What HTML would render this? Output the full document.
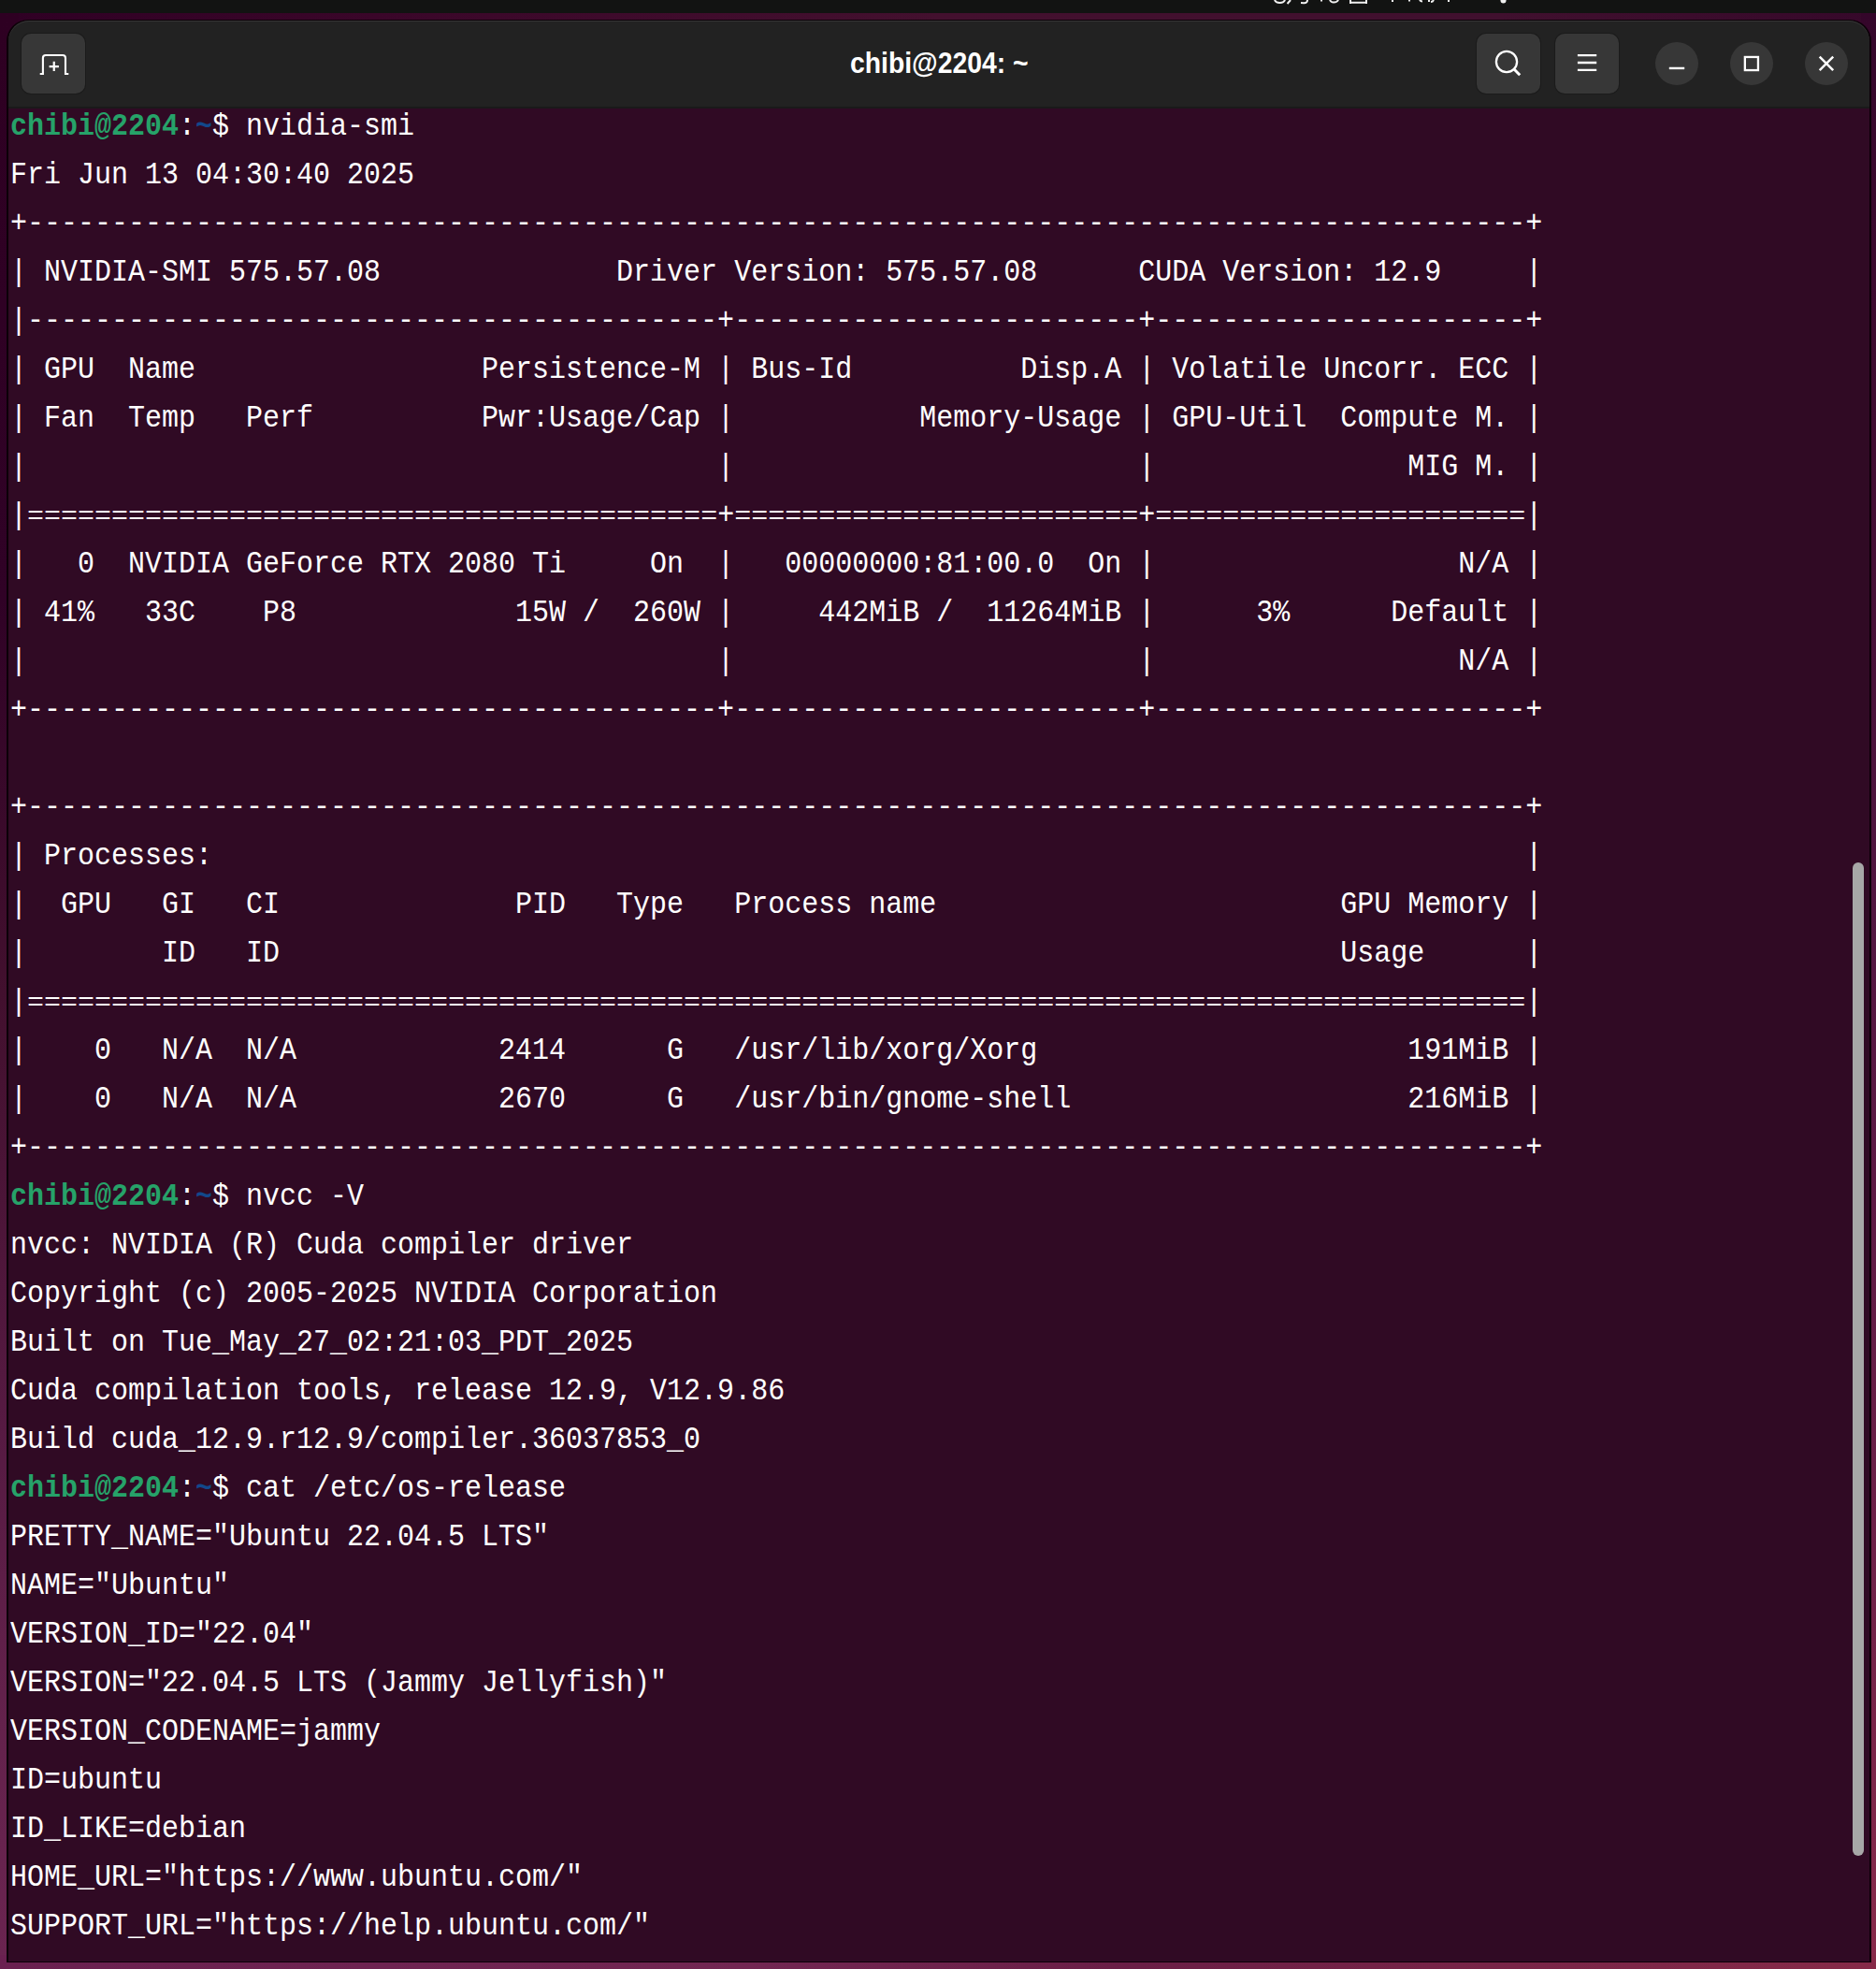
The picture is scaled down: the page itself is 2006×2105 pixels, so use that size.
<!DOCTYPE html>
<html><head><meta charset="utf-8">
<style>
html,body{margin:0;padding:0;}
body{width:2006px;height:2105px;position:relative;overflow:hidden;background:#6e2450;font-family:"Liberation Sans",sans-serif;}
#topbar{position:absolute;left:0;top:0;width:2006px;height:14px;background:#121312;}
#wallT{position:absolute;left:0;top:14px;width:2006px;height:30px;background:linear-gradient(90deg,#2f0024 0%,#3a0629 20%,#43102e 50%,#40102e 80%,#36082a 100%);}
#wallL{position:absolute;left:0;top:14px;width:20px;height:2091px;background:linear-gradient(180deg,#2e0022 0%,#300226 30%,#42102e 50%,#561a42 72%,#64224c 88%,#6a2450 100%);}
#wallR{position:absolute;left:1990px;top:14px;width:16px;height:2091px;background:linear-gradient(180deg,#34062a 0%,#3e0c30 20%,#501640 45%,#5c1a44 60%,#6e2248 80%,#882a4a 100%);}
#wallB{position:absolute;left:0;top:2090px;width:2006px;height:15px;background:linear-gradient(90deg,#6a2050 0%,#722652 40%,#6a1e46 60%,#862a48 100%);}
#win{position:absolute;left:7px;top:21px;width:1994px;height:2077px;background:#0c0008;border-radius:23px 23px 0 0;}
#hdr{position:absolute;left:9px;top:22px;width:1990px;height:92px;background:#222222;border-radius:22px 22px 0 0;box-shadow:inset 0 1px 0 #353535;}
#hdrline{position:absolute;left:9px;top:114px;width:1990px;height:2px;background:#1a1a1a;}
#term{position:absolute;left:9px;top:116px;width:1990px;height:1981px;background:#300a24;overflow:hidden;}
#scroll{position:absolute;left:1981px;top:922px;width:12px;height:1062px;border-radius:6px;background:#a7a7a7;}
.btn{position:absolute;background:#373737;border-radius:10px;box-shadow:0 0 0 1px #1b1b1b;}
.circ{position:absolute;width:46px;height:46px;border-radius:50%;background:#373737;top:45px;}
#title{position:absolute;left:909px;top:53.8px;white-space:pre;color:#ffffff;font-weight:bold;font-size:28.34px;line-height:28.34px;transform-origin:0 24px;transform:scaleY(1.09);}
svg{position:absolute;overflow:visible;}
#tb i{position:absolute;top:0;height:4px;background:#e8e8e8;}
#txt{position:absolute;left:1.5px;top:-6px;margin:0;font-family:"Liberation Mono",monospace;font-size:33px;line-height:52px;color:#ffffff;white-space:pre;transform-origin:0 0;transform:scaleX(0.90909);}
.eq{display:inline-block;transform-origin:0 23.9px;transform:translateY(1.6px) scaleY(0.86);}
.g{color:#26a269;font-weight:bold;}
.b{color:#12488b;font-weight:bold;}
</style></head><body>
<div id="topbar"></div>
<div id="wallT"></div>
<div id="wallL"></div>
<div id="wallR"></div>
<div id="wallB"></div>
<div id="win"></div>
<div id="hdr"></div>
<div id="hdrline"></div>
<div id="term">
<pre id="txt"><span class="g">chibi@2204</span>:<span class="b">~</span>$ nvidia-smi
Fri Jun 13 04:30:40 2025
+-----------------------------------------------------------------------------------------+
| NVIDIA-SMI 575.57.08              Driver Version: 575.57.08      CUDA Version: 12.9     |
|-----------------------------------------+------------------------+----------------------+
| GPU  Name                 Persistence-M | Bus-Id          Disp.A | Volatile Uncorr. ECC |
| Fan  Temp   Perf          Pwr:Usage/Cap |           Memory-Usage | GPU-Util  Compute M. |
|                                         |                        |               MIG M. |
|<span class="eq">=========================================</span>+<span class="eq">========================</span>+<span class="eq">======================</span>|
|   0  NVIDIA GeForce RTX 2080 Ti     On  |   00000000:81:00.0  On |                  N/A |
| 41%   33C    P8             15W /  260W |     442MiB /  11264MiB |      3%      Default |
|                                         |                        |                  N/A |
+-----------------------------------------+------------------------+----------------------+

+-----------------------------------------------------------------------------------------+
| Processes:                                                                              |
|  GPU   GI   CI              PID   Type   Process name                        GPU Memory |
|        ID   ID                                                               Usage      |
|<span class="eq">=========================================================================================</span>|
|    0   N/A  N/A            2414      G   /usr/lib/xorg/Xorg                      191MiB |
|    0   N/A  N/A            2670      G   /usr/bin/gnome-shell                    216MiB |
+-----------------------------------------------------------------------------------------+
<span class="g">chibi@2204</span>:<span class="b">~</span>$ nvcc -V
nvcc: NVIDIA (R) Cuda compiler driver
Copyright (c) 2005-2025 NVIDIA Corporation
Built on Tue_May_27_02:21:03_PDT_2025
Cuda compilation tools, release 12.9, V12.9.86
Build cuda_12.9.r12.9/compiler.36037853_0
<span class="g">chibi@2204</span>:<span class="b">~</span>$ cat /etc/os-release
PRETTY_NAME="Ubuntu 22.04.5 LTS"
NAME="Ubuntu"
VERSION_ID="22.04"
VERSION="22.04.5 LTS (Jammy Jellyfish)"
VERSION_CODENAME=jammy
ID=ubuntu
ID_LIKE=debian
HOME_URL="https://www.ubuntu.com/"
SUPPORT_URL="https://help.ubuntu.com/"</pre>
<div id="scroll" style="left:1972px;top:806px;"></div>
</div>
<div class="btn" style="left:23px;top:36px;width:68px;height:64px;"></div>
<div class="btn" style="left:1579px;top:36px;width:68px;height:64px;"></div>
<div class="btn" style="left:1663px;top:36px;width:68px;height:64px;"></div>
<div class="circ" style="left:1770px;"></div>
<div class="circ" style="left:1850px;"></div>
<div class="circ" style="left:1930px;"></div>
<div id="title">chibi@2204: ~</div>
<svg width="2006" height="130" style="left:0;top:0;" fill="none" stroke="#ffffff">
<path d="M42.7,79 H45.9 V62 Q45.9,59 48.9,59 H67 Q70,59 70,62 V79 H73.3" stroke-width="2.1"/>
<path d="M52.6,71.1 H62.9 M57.75,65.8 V76.1" stroke-width="2.2"/>
<circle cx="1611" cy="66" r="11.1" stroke-width="2.3"/>
<path d="M1619,74 L1625.2,80.2" stroke-width="3"/>
<path d="M1686.9,59.05 H1707.2 M1686.9,67 H1707.2 M1686.9,74.9 H1707.2" stroke-width="2.3"/>
<path d="M1784.8,72.95 H1801.2" stroke-width="2.4"/>
<rect x="1865.85" y="60.95" width="14.1" height="14.1" stroke-width="2.3"/>
<path d="M1945.7,60.6 L1960.2,75.2 M1960.2,60.6 L1945.7,75.2" stroke-width="2.5"/>
</svg>
<svg width="2006" height="16" style="left:0;top:0;" fill="none" stroke="#f0f0f0" stroke-width="2">
<path d="M1363,0 Q1364,3 1368.5,3 Q1373,3 1374,0"/>
<path d="M1380,0 L1376.5,4"/>
<path d="M1398,0 Q1398,3.5 1394,3.2 L1391,3"/>
<path d="M1413,0 V1.5"/>
<path d="M1422,0 Q1423,2.5 1426,2.5 Q1430,2.5 1431,0"/>
<path d="M1444,0 V4 M1461,0 V4 M1444,2.8 H1461"/>
<path d="M1489,0 V2"/>
<path d="M1507,0 V1.5 M1518,0 Q1519,1.5 1521,1.5 M1528,0 V2 M1533,0 Q1532,2 1530,2"/>
<path d="M1549,0 V2"/>
<circle cx="1607.5" cy="0.5" r="3" fill="#f0f0f0" stroke="none"/>
</svg>

</body></html>
